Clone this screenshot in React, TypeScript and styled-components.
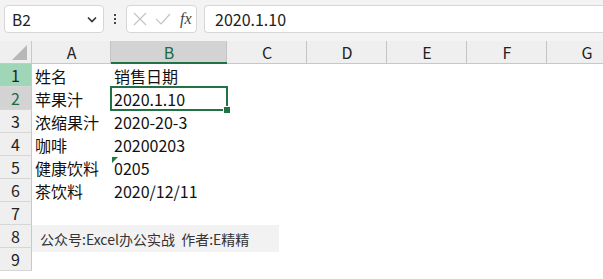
import styled, { createGlobalStyle } from "styled-components";

const GlobalStyle = createGlobalStyle`
  html, body {
    margin: 0;
    padding: 0;
    background: #ffffff;
    overflow: hidden;
  }
  body {
    font-family: "Noto Sans CJK SC", "Noto Sans", sans-serif;
  }
`;

const Page = styled.div`
  width: 603px;
  height: 279px;
  background: #ffffff;
  overflow: hidden;
  display: flex;
  flex-direction: column;
`;

const Toolbar = styled.div`
  height: 41px;
  flex: none;
  background: #f3f3f3;
  display: flex;
  align-items: flex-start;
  padding: 5px 0 0 4px;
  box-sizing: border-box;
`;

const NameBox = styled.div`
  width: 100px;
  height: 28px;
  box-sizing: border-box;
  background: #fff;
  border: 1px solid #d6d6d6;
  border-radius: 4px;
  display: flex;
  align-items: center;
  justify-content: space-between;
  padding: 0 6px 0 7px;
  font-size: 15.5px;
  color: #222;
`;

const Dots = styled.div`
  width: 22px;
  height: 28px;
  display: flex;
  flex-direction: column;
  align-items: center;
  justify-content: center;
  gap: 2px;
  span {
    width: 2px;
    height: 2px;
    background: #444;
  }
`;

const FxBox = styled.div`
  width: 71px;
  height: 28px;
  box-sizing: border-box;
  background: #fff;
  border: 1px solid #d6d6d6;
  border-radius: 4px;
  display: flex;
  align-items: center;
  padding: 0 4px 0 6px;
  gap: 8px;
`;

const FxLabel = styled.span`
  font-family: "Liberation Serif", serif;
  font-style: italic;
  font-size: 16px;
  color: #444;
  margin-left: 1px;
`;

const FormulaBox = styled.div`
  margin-left: 7px;
  flex: 1;
  height: 28px;
  box-sizing: border-box;
  background: #fff;
  border: 1px solid #d6d6d6;
  border-right: none;
  border-radius: 4px 0 0 4px;
  display: flex;
  align-items: center;
  padding-left: 10px;
  font-size: 16px;
  color: #222;
`;

const Sheet = styled.div`
  position: relative;
  display: grid;
  grid-template-columns: 32px 79px 116px 80px 80px 80px 80px 80px;
  grid-template-rows: repeat(10, 23px);
`;

const Corner = styled.div`
  background: #efefef;
  border-right: 1px solid #c8c8c8;
  border-bottom: 1px solid #c8c8c8;
  box-sizing: border-box;
  position: relative;
  svg {
    position: absolute;
    right: 4px;
    bottom: 3px;
  }
`;

const ColHead = styled.div<{ $active?: boolean }>`
  background: ${(p) => (p.$active ? "#d3d3d3" : "#efefef")};
  color: ${(p) => (p.$active ? "#1e6b41" : "#222")};
  border-bottom: ${(p) => (p.$active ? "2px solid #217346" : "1px solid #c8c8c8")};
  box-sizing: border-box;
  display: flex;
  align-items: center;
  justify-content: center;
  font-size: 16px;
  position: relative;
  &::after {
    content: "";
    position: absolute;
    right: 0;
    top: 0;
    bottom: 0;
    width: 1px;
    background: #c4c4c4;
  }
`;

const RowHead = styled.div<{ $tone?: "green" | "grey" }>`
  background: ${(p) =>
    p.$tone === "green" ? "#a0d6b8" : p.$tone === "grey" ? "#d3d3d3" : "#efefef"};
  color: ${(p) => (p.$tone === "grey" ? "#1e6b41" : "#222")};
  border-right: 1px solid #c8c8c8;
  border-bottom: 1px solid #d6d6d6;
  box-sizing: border-box;
  display: flex;
  align-items: center;
  justify-content: center;
  font-size: 16px;
`;

const Cell = styled.div`
  font-size: 16px;
  color: #111;
  display: flex;
  align-items: center;
  padding-left: 3px;
  white-space: nowrap;
  position: relative;
  line-height: 1;
`;

const Selected = styled(Cell)`
  outline: 2px solid #217346;
  outline-offset: -1px;
  z-index: 2;
  &::after {
    content: "";
    position: absolute;
    right: -4px;
    bottom: -4px;
    width: 6px;
    height: 6px;
    background: #217346;
    border: 1px solid #fff;
  }
`;

const Flag = styled.span`
  position: absolute;
  left: 1px;
  top: 1px;
  width: 0;
  height: 0;
  border-top: 6px solid #1e7b3a;
  border-right: 6px solid transparent;
`;

const Note = styled.div`
  position: absolute;
  left: 32px;
  top: 184px;
  width: 247px;
  height: 27px;
  background: #f2f2f2;
  display: flex;
  align-items: center;
  padding-left: 8px;
  box-sizing: border-box;
  font-size: 14px;
  color: #333;
  white-space: nowrap;
`;

const columns = ["A", "B", "C", "D", "E", "F", "G"];

const rows: [string, string][] = [
  ["姓名", "销售日期"],
  ["苹果汁", "2020.1.10"],
  ["浓缩果汁", "2020-20-3"],
  ["咖啡", "20200203"],
  ["健康饮料", "0205"],
  ["茶饮料", "2020/12/11"],
  ["", ""],
  ["", ""],
  ["", ""],
];

export default function App() {
  return (
    <Page>
      <GlobalStyle />
      <Toolbar>
        <NameBox>
          B2
          <svg width="10" height="7" viewBox="0 0 10 7">
            <path d="M1 1.5 L5 5.5 L9 1.5" fill="none" stroke="#333" strokeWidth="1.6" />
          </svg>
        </NameBox>
        <Dots>
          <span />
          <span />
          <span />
        </Dots>
        <FxBox>
          <svg width="14" height="14" viewBox="0 0 14 14">
            <path d="M1 1 L13 13 M13 1 L1 13" stroke="#c4c4c4" strokeWidth="1.2" />
          </svg>
          <svg width="16" height="14" viewBox="0 0 16 14">
            <path d="M1 7 L6 12 L15 2" fill="none" stroke="#c4c4c4" strokeWidth="1.2" />
          </svg>
          <FxLabel>fx</FxLabel>
        </FxBox>
        <FormulaBox>2020.1.10</FormulaBox>
      </Toolbar>
      <Sheet>
        <Corner>
          <svg width="15" height="15" viewBox="0 0 15 15">
            <path d="M15 0 L15 15 L0 15 Z" fill="#b8b8b8" />
          </svg>
        </Corner>
        {columns.map((c) => (
          <ColHead key={c} $active={c === "B"}>
            {c}
          </ColHead>
        ))}
        {rows.map(([a, b], i) => {
          const n = i + 1;
          return [
            <RowHead key={`h${n}`} $tone={n === 1 ? "green" : n === 2 ? "grey" : undefined}>
              {n}
            </RowHead>,
            <Cell key={`a${n}`}>{a}</Cell>,
            n === 2 ? (
              <Selected key={`b${n}`}>{b}</Selected>
            ) : (
              <Cell key={`b${n}`}>
                {n === 5 && <Flag />}
                {b}
              </Cell>
            ),
            <Cell key={`c${n}`} />,
            <Cell key={`d${n}`} />,
            <Cell key={`e${n}`} />,
            <Cell key={`f${n}`} />,
            <Cell key={`g${n}`} />,
          ];
        })}
        <Note>公众号:Excel办公实战&nbsp;&nbsp;作者:E精精</Note>
      </Sheet>
    </Page>
  );
}
